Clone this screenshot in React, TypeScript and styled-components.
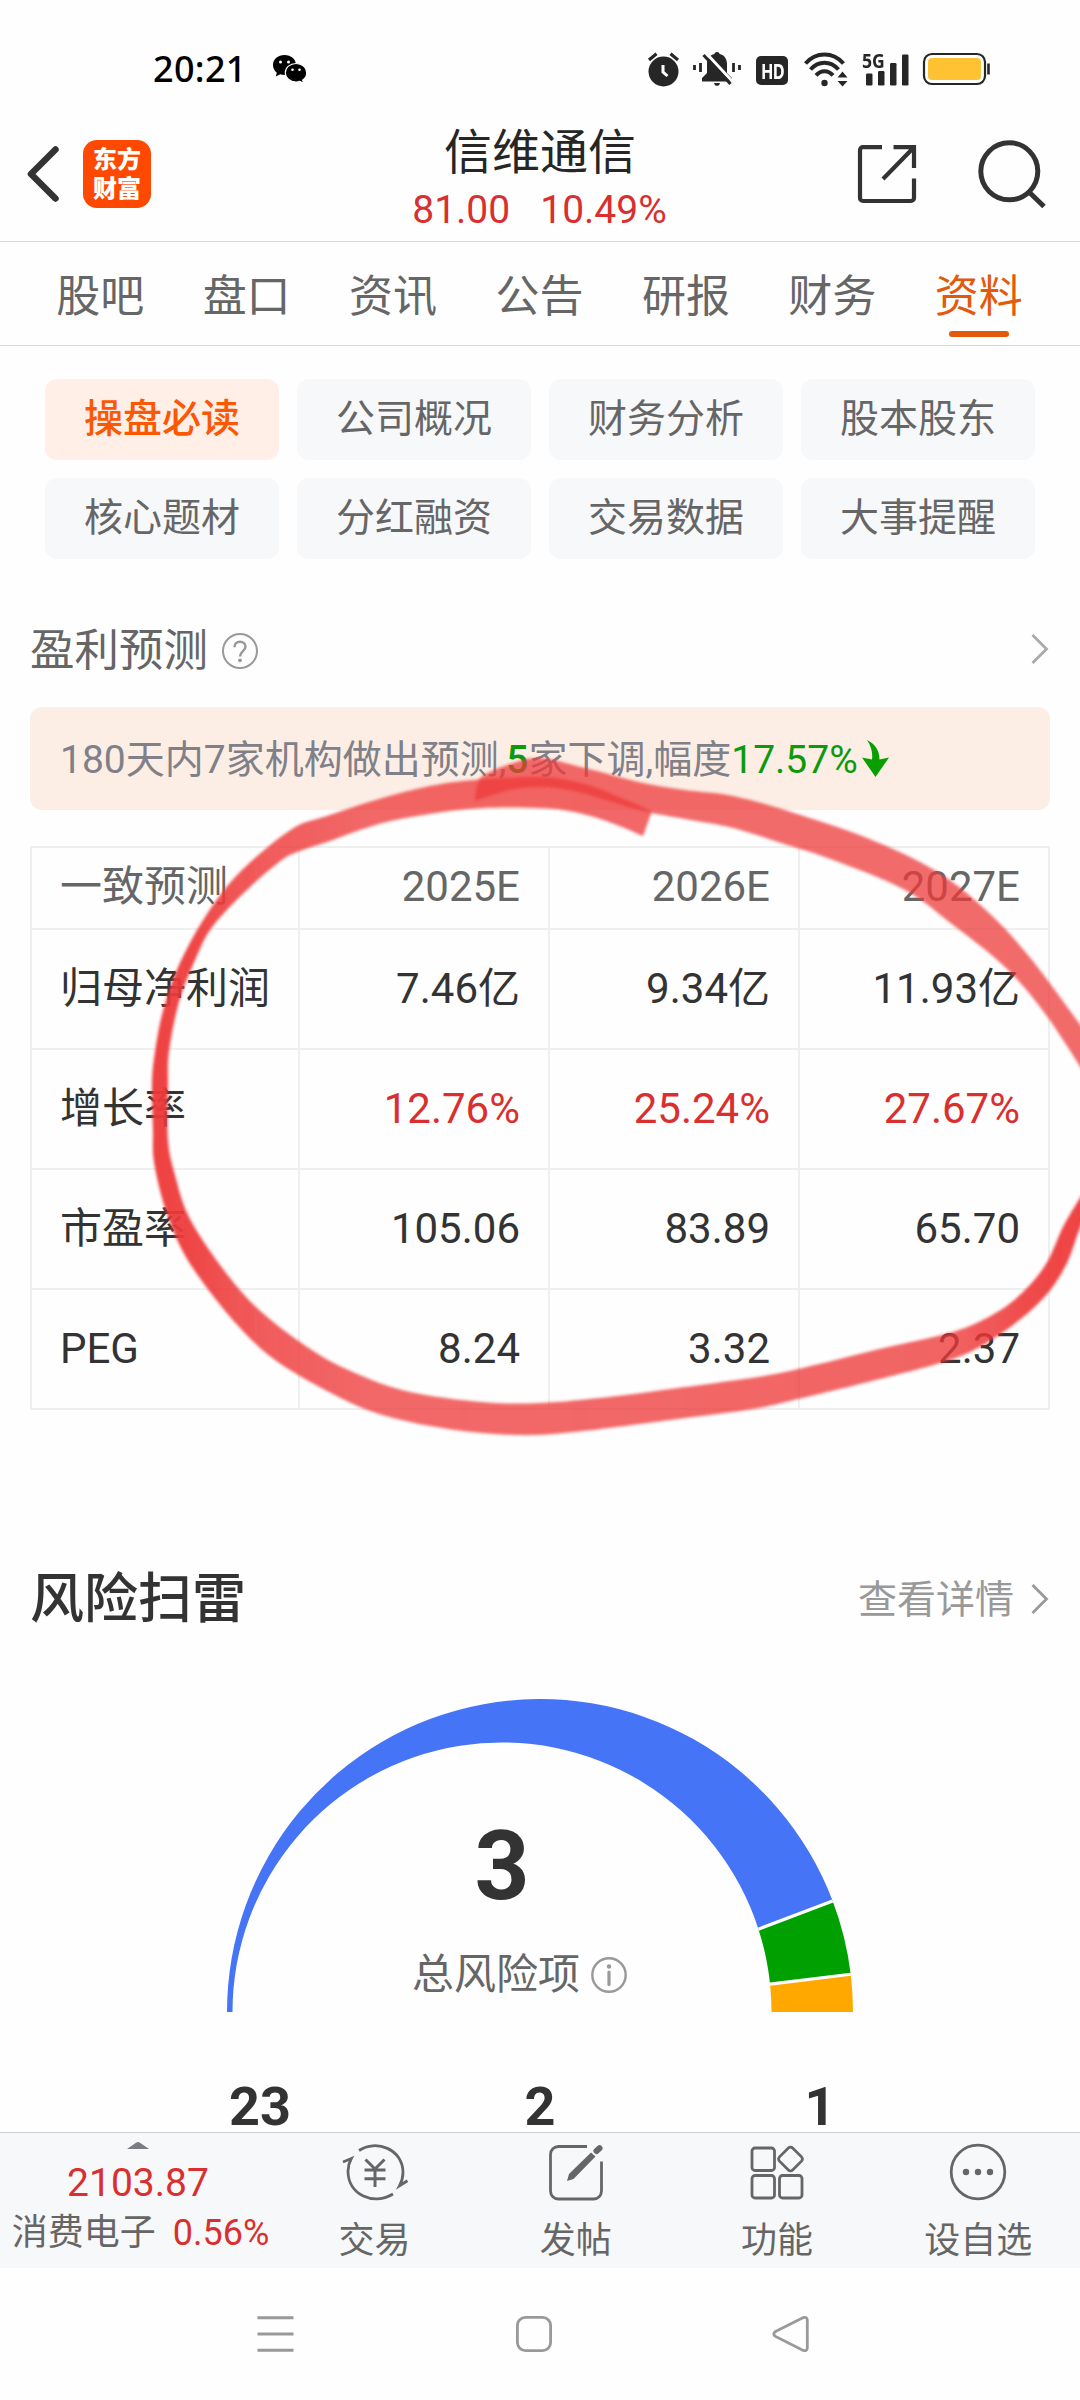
import React from "react";
import styled, { createGlobalStyle } from "styled-components";

const GlobalStyle = createGlobalStyle`
  * { box-sizing: border-box; }
  html, body { margin: 0; padding: 0; background: #fefefe; }
  body { font-family: Roboto, "Noto Sans CJK SC", sans-serif; color: #333; }
  svg { display: block; flex: none; overflow: visible; }
`;

const Page = styled.div`
  position: relative;
  width: 1080px;
  height: 2400px;
  overflow: hidden;
  display: flex;
  flex-direction: column;
  background: #fefefe;
`;

/* ---------- status bar ---------- */

const StatusBar = styled.div`
  height: 95px;
  padding: 43px 90px 0 153px;
  display: flex;
  justify-content: space-between;
  flex: none;
`;

const StatusGroup = styled.div<{ $gap: number }>`
  display: flex;
  align-items: center;
  height: 52px;
  gap: ${(p) => p.$gap}px;
`;

const Clock = styled.span`
  font: 500 36px/52px "Noto Sans", sans-serif;
  color: #000;
  letter-spacing: 0.3px;
`;

const HdBadge = styled.span`
  width: 32px;
  height: 29px;
  margin-left: 1px;
  margin-right: 2px;
  margin-top: 2px;
  border-radius: 5px;
  background: #262626;
  color: #fff;
  font: 700 22px/29px "Noto Sans", sans-serif;
  letter-spacing: -1px;
  display: flex;
  justify-content: center;

  span {
    transform: scaleX(0.74);
  }
`;

/* ---------- header ---------- */

const Header = styled.header`
  height: 147px;
  flex: none;
  display: grid;
  grid-template-columns: 300px 1fr 300px;
  border-bottom: 1px solid #d6d6d6;
`;

const HeaderSide = styled.div<{ $end?: boolean }>`
  display: flex;
  align-items: center;
  justify-content: ${(p) => (p.$end ? "flex-end" : "flex-start")};
  padding: ${(p) => (p.$end ? "12px 34px 0 0" : "12px 0 0 27px")};
  gap: ${(p) => (p.$end ? 62 : 24)}px;
`;

const Logo = styled.div`
  width: 68px;
  height: 68px;
  border-radius: 14px;
  background: #ff4800;
  color: #fff;
  font: 900 24px/29px Roboto, "Noto Sans CJK SC", sans-serif;
  text-align: center;
  padding-top: 6px;
`;

const TitleBlock = styled.div`
  display: flex;
  flex-direction: column;
  align-items: center;
  padding-top: 30px;
  gap: 7px;
`;

const StockName = styled.h1`
  margin: 0;
  font-size: 48px;
  font-weight: 400;
  line-height: 56px;
  color: #262626;
`;

const Quote = styled.div`
  display: flex;
  gap: 30px;
  padding-right: 1px;
  font-size: 39px;
  line-height: 44px;
  color: #d92f2f;
`;

/* ---------- tabs ---------- */

const Tabs = styled.nav`
  height: 104px;
  flex: none;
  padding: 0 28px 0 27px;
  display: flex;
  border-bottom: 1px solid #d6d6d6;
`;

const Tab = styled.div<{ $active?: boolean }>`
  flex: 1;
  display: flex;
  flex-direction: column;
  align-items: center;
  padding-top: 27px;
  font-size: 44px;
  line-height: 56px;
  color: ${(p) => (p.$active ? "#e25a0a" : "#666")};

  &::after {
    content: "";
    width: 60px;
    height: 6px;
    margin-top: 6px;
    border-radius: 3px;
    background: ${(p) => (p.$active ? "#e25a0a" : "transparent")};
  }
`;

/* ---------- content ---------- */

const Content = styled.main`
  flex: 1;
  min-height: 0;
  overflow: hidden;
  display: flex;
  flex-direction: column;
  padding: 33px 30px 0;
`;

const PillGrid = styled.div`
  flex: none;
  display: grid;
  grid-template-columns: repeat(4, 234px);
  grid-auto-rows: 81px;
  gap: 18px;
  padding: 0 15px;
`;

const Pill = styled.div<{ $active?: boolean }>`
  border-radius: 12px;
  text-align: center;
  font-size: 39px;
  line-height: 81px;
  font-weight: ${(p) => (p.$active ? 500 : 400)};
  color: ${(p) => (p.$active ? "#fa5805" : "#666")};
  background: ${(p) => (p.$active ? "#ffefe7" : "#f7f8fa")};
`;

const SectionHead = styled.div<{ $top: number }>`
  flex: none;
  height: 60px;
  margin-top: ${(p) => p.$top}px;
  display: flex;
  align-items: center;
  justify-content: space-between;

  > svg {
    margin-bottom: 5px;
  }
`;

const ForecastTitle = styled.h2`
  margin: 0;
  font-size: 44.5px;
  font-weight: 400;
  line-height: 60px;
  color: #666;
  display: flex;
  align-items: center;
  gap: 14px;
`;

const RiskTitle = styled.h2`
  margin: 0;
  font-size: 54px;
  font-weight: 500;
  line-height: 60px;
  color: #333;
`;

const DetailLink = styled.div`
  display: flex;
  align-items: center;
  gap: 18px;
  font-size: 39px;
  line-height: 60px;
  color: #999;

  svg {
    margin-bottom: 3px;
  }
`;

const Banner = styled.div`
  flex: none;
  height: 103px;
  margin-top: 26px;
  padding: 2px 30px 0;
  border-radius: 12px;
  background: #fceee5;
  display: flex;
  align-items: center;
  font-size: 39px;
  line-height: 60px;
  color: #808088;
  white-space: nowrap;

  svg {
    margin: 0 0 3px 4px;
  }
`;

const Down = styled.span<{ $strong?: boolean }>`
  color: #0c9a0c;
  font-weight: ${(p) => (p.$strong ? 500 : 400)};
`;

const Table = styled.div`
  flex: none;
  margin-top: 36px;
  border: 2px solid #efefef;
  border-bottom: none;
`;

const Row = styled.div<{ $head?: boolean; $red?: boolean }>`
  height: ${(p) => (p.$head ? 82 : 120)}px;
  display: grid;
  grid-template-columns: 268px 250px 250px 248px;
  border-bottom: 2px solid #efefef;
  font-size: 42px;
  line-height: ${(p) => (p.$head ? 78 : 118)}px;
  color: ${(p) => (p.$head ? "#666" : "#333")};

  > :not(:first-child) {
    color: ${(p) => (p.$red ? "#d92f2f" : "inherit")};
  }
`;

const Cell = styled.div`
  padding: 0 28px 0 0;
  text-align: right;
  border-right: 2px solid #efefef;
  white-space: nowrap;

  &:first-child {
    padding: 0 0 0 28px;
    text-align: left;
  }
  &:last-child {
    border-right: none;
  }
`;

/* ---------- risk gauge ---------- */

const Gauge = styled.div`
  flex: none;
  position: relative;
  width: 626px;
  height: 313px;
  margin: 69px 0 0 197px;
`;

const GaugeLabel = styled.div`
  position: absolute;
  left: 185px;
  top: 110px;
  display: flex;
  flex-direction: column;
  align-items: flex-start;
`;

const GaugeTotal = styled.div`
  width: 180px;
  font-size: 96px;
  font-weight: 700;
  line-height: 114px;
  text-align: center;
  color: #333;
`;

const GaugeCaption = styled.div`
  display: flex;
  align-items: center;
  gap: 11px;
  margin-top: 24px;
  font-size: 42px;
  line-height: 56px;
  color: #666;
  white-space: nowrap;
`;

const Counts = styled.div`
  flex: none;
  display: grid;
  grid-template-columns: repeat(3, 280px);
  justify-content: center;
  margin-top: 69px;
  font-size: 54px;
  font-weight: 700;
  line-height: 51px;
  text-align: center;
  color: #333;
`;

/* ---------- bottom ---------- */

const Footer = styled.footer`
  flex: none;
  height: 136px;
  display: flex;
  background: #f7f8fa;
  border-top: 1px solid #d0d1d4;
`;

const Ticker = styled.div`
  width: 275px;
  padding-top: 9px;
  display: flex;
  flex-direction: column;
  align-items: center;
  color: #d92f2f;
`;

const TickerValue = styled.div`
  font-size: 39px;
  line-height: 44px;
  margin: 12px 0 0 1px;
`;

const TickerRow = styled.div`
  display: flex;
  gap: 17px;
  margin: 6px 0 0 6px;
  font-size: 36px;
  line-height: 44px;
  white-space: nowrap;
`;

const SectorName = styled.span`
  color: #666;
`;

const Action = styled.div`
  flex: 1;
  display: flex;
  flex-direction: column;
  align-items: center;
  padding: 10px 2px 0 0;
  gap: 18px;
  font-size: 36px;
  line-height: 44px;
  color: #666;
`;

const SystemNav = styled.div`
  flex: none;
  height: 132px;
  padding: 0 271px 0 257px;
  display: flex;
  align-items: center;
  justify-content: space-between;
`;

const Marker = styled.svg`
  position: absolute;
  left: 0;
  top: 700px;
  pointer-events: none;
`;

/* ---------- icons ---------- */

const WeChat = () => (
  <svg width="34" height="30" viewBox="0 0 34 30">
    <path d="M11.500 1C5 1 0 5.300 0 11c0 3.200 1.500 5.800 3.800 7.700L2.800 22.500l4.400-2.200c1.400.5 2.800.7 4.300.7 6.500 0 11.500-4.300 11.500-10S18 1 11.500 1z" fill="#000" />
    <circle cx="7.500" cy="8" r="1.500" fill="#fff" />
    <circle cx="15.500" cy="8" r="1.500" fill="#fff" />
    <path d="M23 9.500c-6 0-10.700 4-10.700 9.200S17 28 23 28c1.400 0 2.700-.2 3.900-.6l3.700 2-.9-3.300c2.500-1.700 4-4.400 4-7.400 0-5.200-4.700-9.200-10.700-9.200z" fill="#000" stroke="#fff" strokeWidth="1.200" />
    <circle cx="19.500" cy="15.800" r="1.300" fill="#fff" />
    <circle cx="26.500" cy="15.800" r="1.300" fill="#fff" />
  </svg>
);

const Alarm = () => (
  <svg width="31" height="35" viewBox="0 0 31 35">
    <circle cx="15.500" cy="19.500" r="15" fill="#262626" />
    <path d="M1 8 8.500 1.800M30 8l-7.500-6.200" stroke="#262626" strokeWidth="3.200" />
    <path d="M15 13v7l4.500 4" stroke="#fff" strokeWidth="3" fill="none" />
  </svg>
);

const BellOff = () => (
  <svg width="48" height="34" viewBox="0 0 48 34">
    <path d="M24 0c1.800 0 2.500 1 2.500 2 5 1.200 7.500 5 7.500 10v9l5 5v3.500H9V26l5-5v-9c0-5 2.500-8.800 7.500-10 0-1 .7-2 2.500-2z" fill="#262626" />
    <path d="M21 31h6c-.5 2-1.500 2.800-3 2.800S21.500 33 21 31z" fill="#262626" />
    <path d="m13 1 27 29" stroke="#fff" strokeWidth="3" />
    <path d="M10.500 3 37.500 32" stroke="#262626" strokeWidth="3" />
    <path d="M1.500 13v5M7.500 11v9M40.500 11v9M46.500 13v5" stroke="#262626" strokeWidth="2.800" />
  </svg>
);

const Wifi = () => (
  <svg width="44" height="35" viewBox="0 0 44 35" fill="none" stroke="#262626" strokeWidth="4">
    <path d="M1.500 11.500c10.500-12 27.500-12 38 0" />
    <path d="M6.500 17.500c8-9 20-9 28 0" />
    <path d="M12 23.300c5-5.500 12-5.500 17 0" />
    <circle cx="20.500" cy="31" r="3.200" fill="#262626" stroke="none" />
    <path d="m38.500 19.500 5 6h-10zM38.500 34.500l5-5.500h-10z" fill="#262626" stroke="none" />
  </svg>
);

const FiveG = styled.span`
  position: absolute;
  left: 0;
  top: -3px;
  font: 700 20px/22px "Noto Sans", sans-serif;
  color: #262626;
  transform: scaleX(0.88);
  transform-origin: left;
`;

const SignalBox = styled.div`
  position: relative;
  width: 47px;
  height: 33px;
`;

const Signal = () => (
  <SignalBox>
    <svg width="47" height="33" viewBox="0 0 47 33" fill="#262626">
      <rect x="4" y="20.500" width="6.500" height="12" rx="1.200" />
      <rect x="16" y="18" width="6.500" height="14.500" rx="1.200" />
      <rect x="28" y="10" width="6.500" height="22.500" rx="1.200" />
      <rect x="40" y="1.500" width="6.500" height="31" rx="1.200" />
    </svg>
    <FiveG>5G</FiveG>
  </SignalBox>
);

const Battery = () => (
  <svg width="67" height="32" viewBox="0 0 67 32">
    <rect x="1" y="1" width="61" height="30" rx="8" fill="#fff" stroke="#262626" strokeWidth="2.200" />
    <rect x="5" y="5" width="53" height="22" rx="4" fill="#ffc233" />
    <path d="M65.500 10.500v11" stroke="#262626" strokeWidth="2.600" />
  </svg>
);

const Back = () => (
  <svg width="32" height="56" viewBox="0 0 32 56">
    <path d="M28.500 3.500 4 28l24.500 24.500" fill="none" stroke="#333" strokeWidth="6.500" strokeLinecap="round" strokeLinejoin="round" />
  </svg>
);

const Share = () => (
  <svg width="58" height="58" viewBox="0 0 58 58" fill="none" stroke="#333" strokeWidth="4.200">
    <path d="M24 2.200H5a3 3 0 0 0-3 3V53a3 3 0 0 0 3 3h48a3 3 0 0 0 3-3V33.500" />
    <path d="M35.500 2.200H56V23M56 2.200 25 34" />
  </svg>
);

const Search = () => (
  <svg width="68" height="68" viewBox="0 0 68 68" fill="none" stroke="#333" strokeWidth="5">
    <circle cx="31.300" cy="31.300" r="28.500" />
    <path d="m51.500 52.500 14.500 14" />
  </svg>
);

const Question = () => (
  <svg width="36" height="36" viewBox="0 0 36 36" fill="none" stroke="#999" strokeWidth="2">
    <circle cx="18" cy="18" r="17" />
    <path d="M12.500 14.200c0-3.300 2.300-5.400 5.500-5.400s5.500 2.100 5.500 5c0 4.200-5.500 4.600-5.500 9.700" strokeWidth="2.500" />
    <circle cx="18" cy="27.300" r="1.900" fill="#999" stroke="none" />
  </svg>
);

const Info = () => (
  <svg width="36" height="36" viewBox="0 0 36 36" fill="none" stroke="#999" strokeWidth="2.400">
    <circle cx="18" cy="18" r="16.700" />
    <path d="M18 15v12.500" strokeWidth="3.200" strokeLinecap="round" />
    <circle cx="18" cy="9.500" r="2.200" fill="#999" stroke="none" />
  </svg>
);

const Chevron = ({ color = "#aaa" }: { color?: string }) => (
  <svg width="18" height="30" viewBox="0 0 18 30">
    <path d="M.5 1 14.500 15l-14 14" fill="none" stroke={color} strokeWidth="2.800" />
  </svg>
);

const DropArrow = () => (
  <svg width="27" height="37" viewBox="0 0 27 37">
    <path d="M5 0c7 3.500 12.500 9.500 12.500 19.500L27 17.500 13.500 37 0 17.500l10 2C11 12.500 9 6 5 0z" fill="#0a9f00" />
  </svg>
);

const line = { fill: "none", stroke: "#666", strokeWidth: 2.8 } as const;

const Trade = () => (
  <svg width="66" height="58" viewBox="0 0 66 58" {...line}>
    <path d="M17 7.500C34-4 61 6 61 29.500c0 4.500-1.200 9-3.500 13.300l8-5" />
    <path d="M51 51C32 63 6 52 6 28c0-4.200 1-8.200 3.300-12.500L1 19" />
    <path d="m23.500 16.500 9.500 9.500 9.500-9.500M33 26v18M22.500 27h21M22.500 35.800h21" strokeWidth="3" />
  </svg>
);

const Compose = () => (
  <svg width="54" height="58" viewBox="0 0 54 58" {...line}>
    <path d="M38 3.500H9.500a8 8 0 0 0-8 8V48a8 8 0 0 0 8 8h35a8 8 0 0 0 8-8V18.500" />
    <path d="m18 38 2-7L42 9.500l4.500 4L24.500 36z" fill="#666" stroke="none" />
    <path d="m47.500 8 3-2.800" strokeWidth="6" strokeLinecap="round" />
  </svg>
);

const Functions = () => (
  <svg width="54" height="58" viewBox="0 0 54 58" {...line}>
    <rect x="2" y="5" width="22.500" height="22.500" rx="3" />
    <rect x="2" y="32.500" width="22.500" height="22.500" rx="3" />
    <rect x="29.500" y="32.500" width="22.500" height="22.500" rx="3" />
    <rect x="31.200" y="6.700" width="18.600" height="18.600" rx="3" transform="rotate(45 40.500 16)" />
  </svg>
);

const More = () => (
  <svg width="56" height="58" viewBox="0 0 56 58" {...line}>
    <circle cx="28" cy="29" r="26.800" />
    {[16, 28, 40].map((x) => (
      <circle key={x} cx={x} cy="29" r="3.200" fill="#666" stroke="none" />
    ))}
  </svg>
);

/* ---------- gauge drawing ---------- */

const CX = 313;
const CY = 313;
const R = 313;
const ICX = 275;
const IR = 269.5;

function outer(deg: number) {
  const a = (deg * Math.PI) / 180;
  return [CX + R * Math.cos(a), CY - R * Math.sin(a)];
}

function inner(deg: number) {
  const a = (deg * Math.PI) / 180;
  const d = CX - ICX;
  const t = -d * Math.cos(a) + Math.sqrt(IR * IR - (d * Math.sin(a)) ** 2);
  return [CX + t * Math.cos(a), CY - t * Math.sin(a)];
}

function slice(from: number, to: number) {
  const [a, b] = outer(from);
  const [c, d] = outer(to);
  const [e, f] = inner(to);
  const [g, h] = inner(from);
  return `M${a} ${b}A${R} ${R} 0 0 0 ${c} ${d}L${e} ${f}A${IR} ${IR} 0 0 1 ${g} ${h}Z`;
}

const counts = [23, 2, 1];
const unit = 180 / 26;

const GaugeArc = () => (
  <svg width="626" height="313" viewBox="0 0 626 313">
    <path d={slice(3 * unit, 180)} fill="#4674f6" />
    <path d={slice(unit, 3 * unit)} fill="#00a000" />
    <path d={slice(0, unit)} fill="#ffa800" />
    {[unit, 3 * unit].map((deg) => {
      const [a, b] = outer(deg);
      const [c, d] = inner(deg);
      return <line key={deg} x1={a} y1={b} x2={c} y2={d} stroke="#fff" strokeWidth="3.200" />;
    })}
  </svg>
);

/* ---------- marker stroke ---------- */

type Pt = [number, number];

function curve(pts: Pt[]) {
  let d = "";
  for (let i = 0; i < pts.length - 1; i++) {
    const p0 = pts[Math.max(0, i - 1)];
    const p1 = pts[i];
    const p2 = pts[i + 1];
    const p3 = pts[Math.min(pts.length - 1, i + 2)];
    d += `C${p1[0] + (p2[0] - p0[0]) / 6} ${p1[1] + (p2[1] - p0[1]) / 6} ${p2[0] - (p3[0] - p1[0]) / 6} ${p2[1] - (p3[1] - p1[1]) / 6} ${p2[0]} ${p2[1]}`;
  }
  return d;
}

function band(a: Pt[], b: Pt[]) {
  return `M${a[0].join(" ")}${curve(a)}L${b[0].join(" ")}${curve(b)}Z`;
}

const firstStroke = band(
  [[475, 799], [477, 786], [484, 775], [510, 764], [540, 758], [585, 768], [643, 783], [685, 790], [733, 796], [791, 812], [867, 838], [936, 871], [988, 912], [1032, 960], [1090, 1038]],
  [[1090, 1082], [1046, 1015], [1005, 967], [953, 925], [905, 890], [833, 860], [781, 843], [733, 828], [685, 819], [647, 812], [609, 801], [574, 791], [540, 787], [510, 790], [475, 801]]
);

const secondStroke = band(
  [[1090, 1184], [1080, 1198], [1063, 1227], [1046, 1264], [1022, 1293], [994, 1314], [953, 1332], [884, 1348], [815, 1365], [764, 1376], [678, 1388], [609, 1397], [540, 1403], [482, 1402], [406, 1391], [344, 1368], [300, 1342], [255, 1306], [220, 1265], [189, 1217], [175, 1175], [168, 1140], [168, 1085], [169, 1052], [179, 1002], [196, 958], [213, 926], [248, 889], [282, 860], [300, 851], [327, 842], [379, 824], [430, 814], [482, 808], [540, 808], [574, 812], [609, 822], [643, 836]],
  [[652, 811], [626, 800], [585, 784], [540, 777], [475, 780], [430, 786], [379, 799], [327, 816], [292, 829], [241, 871], [207, 914], [179, 965], [163, 1011], [155, 1052], [152, 1084], [153, 1130], [154, 1162], [165, 1208], [182, 1250], [207, 1288], [241, 1329], [275, 1360], [327, 1391], [379, 1414], [448, 1429], [516, 1435], [574, 1432], [678, 1419], [753, 1409], [798, 1399], [884, 1378], [953, 1359], [988, 1342], [1022, 1318], [1048, 1293], [1067, 1263], [1080, 1228], [1090, 1208]]
);

const RedCircle = () => (
  <Marker width="1080" height="760" viewBox="0 700 1080 760">
    <defs>
      <linearGradient id="ink" gradientUnits="userSpaceOnUse" x1="150" y1="0" x2="1080" y2="0">
        <stop offset="0" stopColor="#ee3838" stopOpacity="0.96" />
        <stop offset="0.040" stopColor="#ee3838" stopOpacity="0.93" />
        <stop offset="0.120" stopColor="#ee3838" stopOpacity="0.82" />
        <stop offset="0.250" stopColor="#ee3838" stopOpacity="0.76" />
        <stop offset="0.860" stopColor="#ee3838" stopOpacity="0.780" />
        <stop offset="0.940" stopColor="#ee3838" stopOpacity="0.900" />
        <stop offset="1" stopColor="#ee3838" stopOpacity="0.950" />
      </linearGradient>
      <filter id="soft" x="-5%" y="-5%" width="110%" height="110%">
        <feGaussianBlur stdDeviation="1.500" />
      </filter>
    </defs>
    <path d={secondStroke} fill="url(#ink)" filter="url(#soft)" />
    <path d={firstStroke} fill="#ee3838" fillOpacity="0.75" filter="url(#soft)" />
  </Marker>
);

/* ---------- data ---------- */

const tabs = ["股吧", "盘口", "资讯", "公告", "研报", "财务", "资料"];
const pills = ["操盘必读", "公司概况", "财务分析", "股本股东", "核心题材", "分红融资", "交易数据", "大事提醒"];
const rows = [
  ["一致预测", "2025E", "2026E", "2027E"],
  ["归母净利润", "7.46亿", "9.34亿", "11.93亿"],
  ["增长率", "12.76%", "25.24%", "27.67%"],
  ["市盈率", "105.06", "83.89", "65.70"],
  ["PEG", "8.24", "3.32", "2.37"],
];
const actions = [
  { label: "交易", Icon: Trade },
  { label: "发帖", Icon: Compose },
  { label: "功能", Icon: Functions },
  { label: "设自选", Icon: More },
];

export default function App() {
  return (
    <Page>
      <GlobalStyle />
      <StatusBar>
        <StatusGroup $gap={26}>
          <Clock>20:21</Clock>
          <WeChat />
        </StatusGroup>
        <StatusGroup $gap={14}>
          <Alarm />
          <BellOff />
          <HdBadge>
            <span>HD</span>
          </HdBadge>
          <Wifi />
          <Signal />
          <Battery />
        </StatusGroup>
      </StatusBar>

      <Header>
        <HeaderSide>
          <Back />
          <Logo>
            东方
            <br />
            财富
          </Logo>
        </HeaderSide>
        <TitleBlock>
          <StockName>信维通信</StockName>
          <Quote>
            <span>81.00</span>
            <span>10.49%</span>
          </Quote>
        </TitleBlock>
        <HeaderSide $end>
          <Share />
          <Search />
        </HeaderSide>
      </Header>

      <Tabs>
        {tabs.map((t) => (
          <Tab key={t} $active={t === "资料"}>
            {t}
          </Tab>
        ))}
      </Tabs>

      <Content>
        <PillGrid>
          {pills.map((p, i) => (
            <Pill key={p} $active={i === 0}>
              {p}
            </Pill>
          ))}
        </PillGrid>

        <SectionHead $top={62}>
          <ForecastTitle>
            盈利预测
            <Question />
          </ForecastTitle>
          <Chevron />
        </SectionHead>

        <Banner>
          <span>
            180天内7家机构做出预测,<Down $strong>5</Down>家下调,幅度<Down>17.57%</Down>
          </span>
          <DropArrow />
        </Banner>

        <Table>
          {rows.map((r, i) => (
            <Row key={r[0]} $head={i === 0} $red={i === 2}>
              {r.map((c) => (
                <Cell key={c}>{c}</Cell>
              ))}
            </Row>
          ))}
        </Table>

        <SectionHead $top={160}>
          <RiskTitle>风险扫雷</RiskTitle>
          <DetailLink>
            查看详情
            <Chevron color="#999" />
          </DetailLink>
        </SectionHead>

        <Gauge>
          <GaugeArc />
          <GaugeLabel>
            <GaugeTotal>3</GaugeTotal>
            <GaugeCaption>
              总风险项
              <Info />
            </GaugeCaption>
          </GaugeLabel>
        </Gauge>

        <Counts>
          {counts.map((c) => (
            <span key={c}>{c}</span>
          ))}
        </Counts>
      </Content>

      <Footer>
        <Ticker>
          <svg width="22" height="7" viewBox="0 0 22 7">
            <path d="M0 7 9 .8q2-1.400 4 0L22 7z" fill="#7b7b82" />
          </svg>
          <TickerValue>2103.87</TickerValue>
          <TickerRow>
            <SectorName>消费电子</SectorName>
            <span>0.56%</span>
          </TickerRow>
        </Ticker>
        {actions.map(({ label, Icon }) => (
          <Action key={label}>
            <Icon />
            {label}
          </Action>
        ))}
      </Footer>

      <SystemNav>
        <svg width="37" height="36" viewBox="0 0 37 36" stroke="#999" strokeWidth="3">
          <path d="M.5 1.800h36M.5 18h36M.5 34.300h36" />
        </svg>
        <svg width="36" height="36" viewBox="0 0 36 36" fill="none" stroke="#999" strokeWidth="2.800">
          <rect x="1.400" y="1.400" width="33.200" height="33.200" rx="8" />
        </svg>
        <svg width="36" height="36" viewBox="0 0 36 36" fill="none" stroke="#999" strokeWidth="2.800">
          <path d="M2 15.800 30.300 1.600q3.800-1.200 4 2.500v27.800q-.2 3.700-4 2.500L2 20.200q-2.200-2.200 0-4.400z" />
        </svg>
      </SystemNav>

      <RedCircle />
    </Page>
  );
}
